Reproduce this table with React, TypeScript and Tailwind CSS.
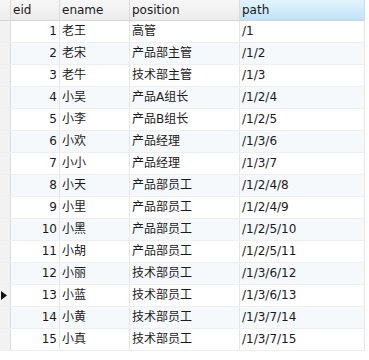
const rows = [
  ["1", "老王", "高管", "/1"],
  ["2", "老宋", "产品部主管", "/1/2"],
  ["3", "老牛", "技术部主管", "/1/3"],
  ["4", "小吴", "产品A组长", "/1/2/4"],
  ["5", "小李", "产品B组长", "/1/2/5"],
  ["6", "小欢", "产品经理", "/1/3/6"],
  ["7", "小小", "产品经理", "/1/3/7"],
  ["8", "小天", "产品部员工", "/1/2/4/8"],
  ["9", "小里", "产品部员工", "/1/2/4/9"],
  ["10", "小黑", "产品部员工", "/1/2/5/10"],
  ["11", "小胡", "产品部员工", "/1/2/5/11"],
  ["12", "小丽", "技术部员工", "/1/3/6/12"],
  ["13", "小蓝", "技术部员工", "/1/3/6/13"],
  ["14", "小黄", "技术部员工", "/1/3/7/14"],
  ["15", "小真", "技术部员工", "/1/3/7/15"],
]

export default function App() {
  return (
    <div
      className="w-[369px] h-[360px] bg-white text-[12px] text-[#1a1a1a] overflow-hidden"
      style={{ fontFamily: '"DejaVu Sans", "Noto Sans CJK SC", sans-serif' }}
    >
      <div className="w-[365px]">
        {/* header */}
        <div className="flex h-[21px] border-b border-[#d5d5d5] bg-gradient-to-b from-[#f7f7f7] to-[#ececec]">
          <div className="w-[11px] shrink-0 border-r border-[#dcdcdc]" />
          <div className="w-[49px] shrink-0 border-r border-[#dcdcdc] pl-[2px] leading-[20px]">eid</div>
          <div className="w-[70px] shrink-0 border-r border-[#dcdcdc] pl-[2px] leading-[20px]">ename</div>
          <div className="w-[110px] shrink-0 border-r border-[#dcdcdc] pl-[2px] leading-[20px]">position</div>
          <div className="w-[125px] shrink-0 border-r border-[#c5dcec] pl-[2px] leading-[20px] bg-gradient-to-b from-[#e3f3fd] to-[#bfe3f8]">path</div>
        </div>
        {rows.map((r, i) => (
          <div
            key={r[0]}
            className={`flex h-[22px] leading-[21px] border-b border-[#efefef] ${i % 2 === 1 ? "bg-[#f5f9fc]" : "bg-white"}`}
          >
            <div className="w-[11px] shrink-0 border-r border-[#dcdcdc] bg-[#f2f2f2] flex items-center justify-center">
              {r[0] === "13" && (
                <svg width="6" height="9" viewBox="0 0 6 9" className="ml-[-2px]">
                  <path d="M0 0 L6 4.5 L0 9 Z" fill="#111" />
                </svg>
              )}
            </div>
            <div className="w-[49px] shrink-0 border-r border-[#e6e6e6] pr-[2px] text-right">{r[0]}</div>
            <div className="w-[70px] shrink-0 border-r border-[#e6e6e6] pl-[2px]">{r[1]}</div>
            <div className="w-[110px] shrink-0 border-r border-[#e6e6e6] pl-[2px]">{r[2]}</div>
            <div className="w-[125px] shrink-0 border-r border-[#e6e6e6] pl-[2px]">{r[3]}</div>
          </div>
        ))}
      </div>
    </div>
  )
}
